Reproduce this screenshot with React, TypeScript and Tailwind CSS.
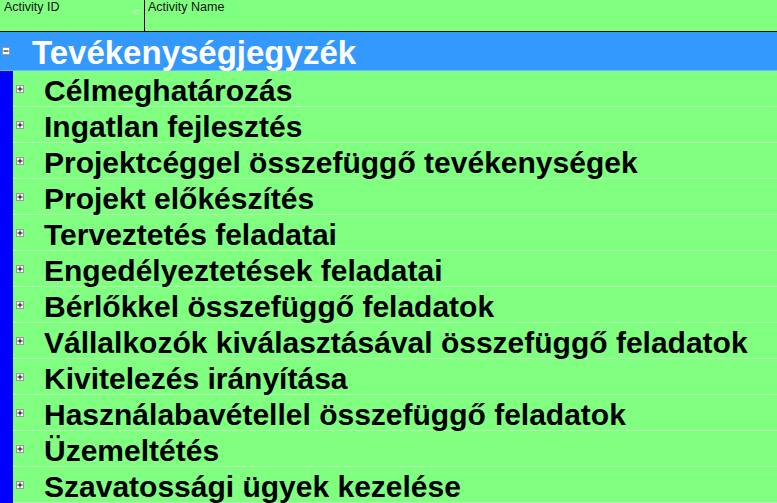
import React from 'react';

const activities = [
  'Célmeghatározás',
  'Ingatlan fejlesztés',
  'Projektcéggel összefüggő tevékenységek',
  'Projekt előkészítés',
  'Terveztetés feladatai',
  'Engedélyeztetések feladatai',
  'Bérlőkkel összefüggő feladatok',
  'Vállalkozók kiválasztásával összefüggő feladatok',
  'Kivitelezés irányítása',
  'Használabavétellel összefüggő feladatok',
  'Üzemeltétés',
  'Szavatossági ügyek kezelése',
];

const ToggleBox = ({ open }: { open: boolean }) => (
  <div className="w-[8px] h-[8px] bg-white border border-[#9a9a9a] flex items-center justify-center shrink-0">
    <svg width="6" height="6" viewBox="0 0 6 6">
      <path d="M0.5 3H5.5" stroke="#000" strokeWidth="1" />
      {!open && <path d="M3 0.5V5.5" stroke="#000" strokeWidth="1" />}
    </svg>
  </div>
);

const App = () => {
  return (
    <div
      className="w-[777px] h-[503px] overflow-hidden bg-[#80ff80] flex flex-col"
      style={{ fontFamily: '"Liberation Sans", Arial, sans-serif' }}
    >
      {/* Column headers */}
      <div className="flex h-[32px] shrink-0 border-b border-black">
        <div className="w-[145px] shrink-0 border-r border-black relative">
          <span className="block pl-[4px] text-[12.5px] leading-[14px] text-[#111]">Activity ID</span>
          <svg className="absolute left-[133px] top-[10px]" width="7" height="6" viewBox="0 0 7 6">
            <path d="M0.5 0.5H6.5L3.5 5Z" fill="none" stroke="#c4e4c4" strokeWidth="1" />
          </svg>
        </div>
        <div className="flex-1">
          <span className="block pl-[3px] text-[12.5px] leading-[14px] text-[#111]">Activity Name</span>
        </div>
      </div>

      {/* Root group */}
      <div className="flex items-center h-[39px] shrink-0 bg-[#3399ff] border-b border-[#66bbff]">
        <div className="pl-[2px] w-[32px]">
          <ToggleBox open />
        </div>
        <span className="pt-[3px] text-[33px] font-bold text-white leading-none whitespace-nowrap">Tevékenységjegyzék</span>
      </div>

      {/* Children */}
      <div className="flex flex-1">
        <div className="w-[13px] bg-[#0000ff] shrink-0" />
        <div className="flex-1 flex flex-col">
          {activities.map((name) => (
            <div key={name} className="flex items-center h-[36px] shrink-0 border-b border-[#a8ffa8]">
              <div className="pl-[3px] w-[31px]">
                <ToggleBox open={false} />
              </div>
              <span className="pt-[4px] text-[30px] font-bold text-black leading-none whitespace-nowrap">{name}</span>
            </div>
          ))}
        </div>
      </div>
    </div>
  );
};

export default App;
